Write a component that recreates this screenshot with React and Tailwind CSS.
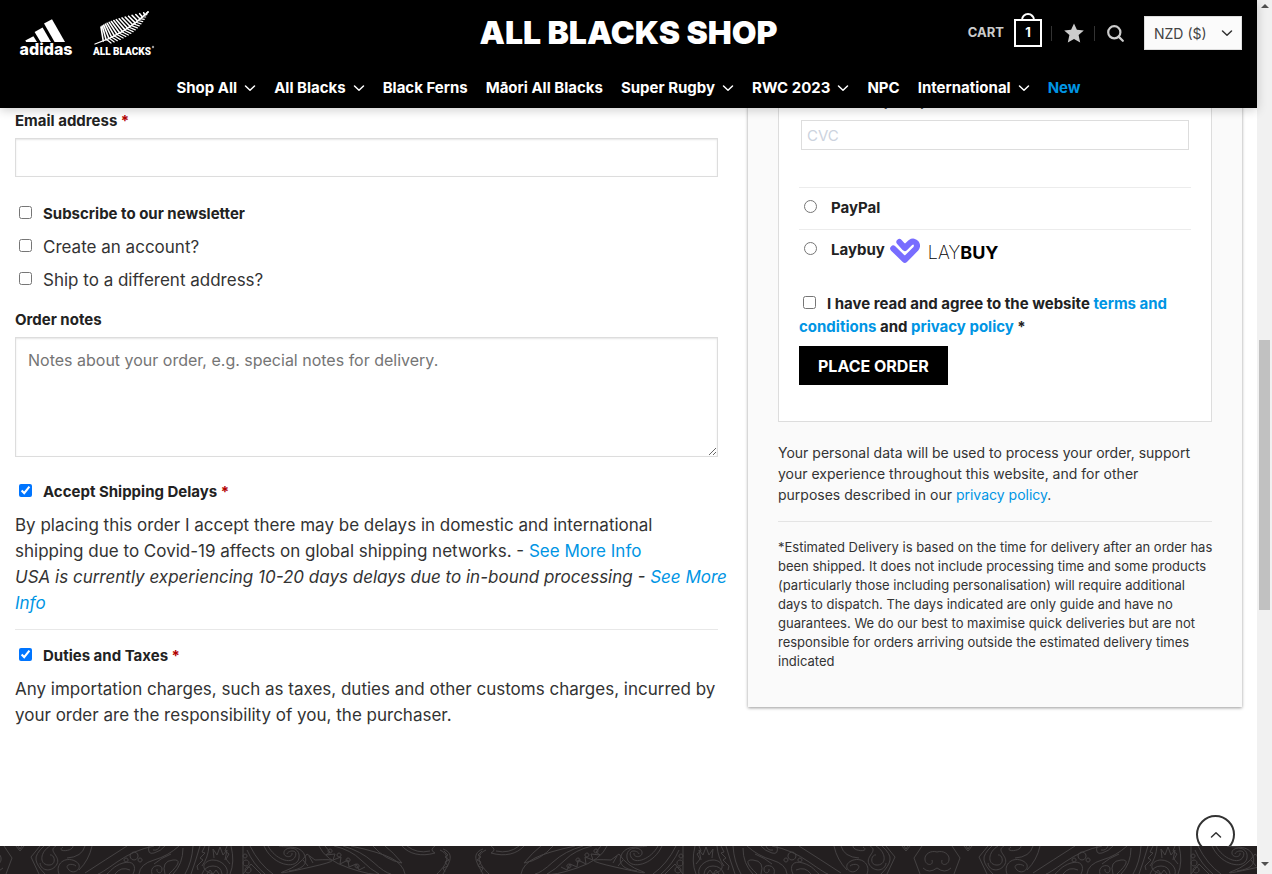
const NAV = [
  { label: "Shop All", menu: true },
  { label: "All Blacks", menu: true },
  { label: "Black Ferns" },
  { label: "Māori All Blacks" },
  { label: "Super Rugby", menu: true },
  { label: "RWC 2023", menu: true },
  { label: "NPC" },
  { label: "International", menu: true },
  { label: "New", accent: true },
];

function Chevron({ className }) {
  return (
    <svg viewBox="0 0 12 8" className={className} fill="none" stroke="currentColor" strokeWidth="1.5" strokeLinecap="round" strokeLinejoin="round" aria-hidden="true">
      <path d="M1.5 2 6 6.2 10.5 2" />
    </svg>
  );
}

function AdidasLogo() {
  return (
    <svg viewBox="0 0 54 40" className="h-10 w-[54px]" fill="#fff" role="img" aria-label="adidas">
      <path d="M25 5.6 33 1.2 46 24H35.6z" />
      <path d="M15.6 14 23.6 9.6 32 24H21.6z" />
      <path d="M6.3 22.6 14.4 18.2 18 24H7.2z" />
      <text x="27" y="36.5" textAnchor="middle" className="font-['Inter',sans-serif] text-[16px] font-extrabold">adidas</text>
    </svg>
  );
}

function quad(a, b, c, t) {
  const u = 1 - t;
  return [0, 1].map((i) => u * u * a[i] + 2 * u * t * b[i] + t * t * c[i]);
}

function AllBlacksLogo() {
  const stem = (t) => quad([4, 33], [34, 23], [57, 1], t);
  const upper = [];
  const lower = [];
  for (let i = 0; i <= 17; i += 1) {
    const k = i / 17;
    upper.push([stem(0.14 + 0.84 * k), quad([10, 16], [20, 8], [57, 1], k)]);
    lower.push([stem(0.2 + 0.78 * k), quad([20, 32], [48, 23], [57, 1], k)]);
  }
  const line = ([[x1, y1], [x2, y2]]) => `M${x1} ${y1}L${x2} ${y2}`;
  return (
    <svg viewBox="0 0 64 47" className="h-[47px] w-16" role="img" aria-label="All Blacks">
      <g fill="none" stroke="#fff" strokeLinecap="round">
        <path d="M4 33Q34 23 57 1" strokeWidth="1.3" />
        <path d={upper.map(line).join("")} strokeWidth="1.6" />
        <path d={lower.map(line).join("")} strokeWidth="1.2" />
      </g>
      <text x="31" y="43.5" textAnchor="middle" fill="#fff" className="font-['Roboto',sans-serif] text-[10px] font-black">ALL BLACKS</text>
      <circle cx="62" cy="36" r="1.2" fill="#999" />
    </svg>
  );
}

function LaybuyLogo() {
  return (
    <span className="flex items-center gap-2 text-black">
      <svg viewBox="0 0 30 26" className="h-[26px] w-[30px]" fill="none" stroke="#786dff" strokeWidth="6" strokeLinecap="round" strokeLinejoin="round" aria-hidden="true">
        <path d="M3.2 10.5 14.8 21.8 25.6 11C29 7 25 1.4 20.6 4.4L14.8 10 9.4 4" />
      </svg>
      <span className="pt-1 text-[18px] leading-5 font-extralight">LAY<b className="font-bold">BUY</b></span>
    </span>
  );
}

function Koru() {
  return (
    <g>
      <path d="M15 0 23 12 17 28M0 6C6 4 13 8 12 14S3 20 5 14M0 22Q8 28 14 22M27 0 31 5 35 0M29 0 31 3 33 0" />
      <path d="M51 0 42 11 50 28M55 0Q46 8 47 14T56 28M61 0C51 6 50 18 59 19S66 8 61 9M67 0C58 5 72 10 68 18S52 26 51 17M74 1C66 6 84 6 84 0M70 28C66 18 76 10 86 15S86 30 80 24 84 17 87 20M96 0Q93 11 78 12M103 0Q100 14 90 24" />
      <path d="M138 0Q116 14 96 27M165 0Q145 4 128 16T109 28M144 28C148 20 144 14 134 17S121 26 118 28M126 28Q132 20 141 24M145 6a4 4 0 1 0 .1 0M137 12a2 2 0 1 0 .1 0M151 12a2 2 0 1 0 .1 0M150 28Q151 18 165 14T190 0M163 28C160 19 173 17 173 23S167 27 168 23M176 28Q172 15 184 14T180 28M182 8Q172 12 165 18M160 0Q158 9 165 7T176 0M171 0Q169 5 164 4" />
      <path d="M194 2Q194 18 184 28M204 0Q203 16 196 28M211 0Q207 14 202 28M216 0 213 6 216 7 211 12 214 14 208 20 209 24M220 0Q219 12 213 20M224 28C209 24 215 14 224 14S240 22 238 28M213 28Q216 20 224 20T233 28M218 28 221 24 224 28 227 24 230 28M225 12 224 3 228 9 231 1 234 9 238 4 236 14M238 0 236 5 240 8 237 13 241 18M242 0Q246 16 241 28" />
      <path d="M254 0V28M258 4Q264 18 276 28M254 28 262 18 272 28M259 21a3 3 0 1 0 .1 0M256 8a2 2 0 1 0 .1 0M257 14a3 3 0 1 0 .1 0M261 0Q270 18 284 28" />
      <path d="M275 0C284 20 308 24 310 12S296 0 295 6 304 12 303 7M279 0C286 13 302 19 306 11S299 4 298 8M290 0C296 2 312-2 316 10S306 24 300 25M318 8Q310 20 296 25T322 21 326 14ZM320 10 324 17M314 14 319 20M330 0Q336 14 360 22T390 28M336 0 341 6 337 9 346 8 344 14 352 11 351 18 359 14 360 21 367 18 370 24 376 21M345 0Q362 4 372 14T390 28M354 0Q372 5 384 16T402 28M341 3a2 2 0 1 0 .1 0M350 7a2 2 0 1 0 .1 0M359 12a2 2 0 1 0 .1 0M368 18a2 2 0 1 0 .1 0" />
      <path d="M362 0Q390 6 402 12T416 28M384 0Q396 14 413 17 404 6 396 0M413 0C420 8 432 11 446 7Q440 4 446 0M418 0Q428 8 441 5M454 3C468 8 458 20 454 28M451 4C464 10 456 20 448 28M455 5 459 9 456 11 460 14 456 16 459 20 454 22 456 26" />
    </g>
  );
}

function FooterPattern() {
  return (
    <svg className="block h-7 w-full" aria-hidden="true">
      <defs>
        <pattern id="koru" x="-11" width="948" height="28" patternUnits="userSpaceOnUse">
          <g fill="none" stroke="#444142" strokeWidth="1">
            <Koru />
            <g transform="translate(948 0) scale(-1 1)">
              <Koru />
            </g>
          </g>
        </pattern>
      </defs>
      <rect width="100%" height="28" fill="url(#koru)" />
    </svg>
  );
}

function Check({ id, children, bold, required, ...rest }) {
  return (
    <div className="flex items-center leading-6">
      <input id={id} type="checkbox" className="mr-[11px] mb-[3px] ml-1 size-[13px]" {...rest} />
      <label htmlFor={id} className={bold ? "text-[15px] font-bold text-[#222]" : "text-[17px] text-[#333]"}>
        {children}
        {required && <span className="text-[#b20000]"> *</span>}
      </label>
    </div>
  );
}

function Link({ children }) {
  return <a href="#" className="text-[#0095e4]">{children}</a>;
}

function Header() {
  return (
    <header className="relative z-20 h-[108px] bg-black text-white shadow-[0_2px_10px_rgba(0,0,0,0.2)]">
      <div className="grid h-[66px] grid-cols-[1fr_auto_1fr] items-center px-[15px]">
        <div className="flex items-end gap-[18px] pt-[3px] pl-1">
          <AdidasLogo />
          <AllBlacksLogo />
        </div>
        <a href="#" className="text-[32px] leading-[66px] font-black">ALL BLACKS SHOP</a>
        <div className="flex items-center justify-end">
          <a href="#" className="flex items-center gap-[10px] text-[13px] font-bold text-[#ccc]">
            CART
            <span className="relative flex size-7 items-center justify-center border-2 border-white text-white">
              <span className="absolute -top-2 left-[5px] h-[7px] w-[14px] rounded-t-full border-2 border-b-0 border-white" />
              1
            </span>
          </a>
          <span className="mx-[9px] h-[15px] w-px bg-[#333]" />
          <a href="#" aria-label="Wishlist" className="px-[3px]">
            <svg viewBox="0 0 20 20" className="size-5" fill="#ccc"><path d="m10 .5 2.9 6.3 6.9.6-5.2 4.6 1.6 7.5-6.2-3.6-6.2 3.6 1.6-7.5L.2 7.4l6.900-.6z" /></svg>
          </a>
          <span className="mr-[12px] ml-[7px] h-[15px] w-px bg-[#333]" />
          <button type="button" aria-label="Search">
            <svg viewBox="0 0 17 17" className="size-[17px]" fill="none" stroke="#ccc" strokeWidth="2.2"><circle cx="7.3" cy="7.3" r="6.1" /><path d="m11.6 11.6 4.2 4.2" strokeLinecap="round" /></svg>
          </button>
          <div className="relative ml-5">
            <select aria-label="Currency" defaultValue="NZD" className="h-[34px] w-[98px] appearance-none border border-[#ddd] bg-[#fbfbfb] pl-[9px] text-[14px] text-[#444]">
              <option value="NZD">NZD ($)</option>
            </select>
            <Chevron className="pointer-events-none absolute top-[13px] right-[9px] h-[8px] w-3 text-[#333]" />
          </div>
        </div>
      </div>
      <nav className="flex h-[42px] items-center justify-center gap-[18px] pt-[2px] text-[15px] font-bold">
        {NAV.map((item) => (
          <a key={item.label} href="#" className={item.accent ? "text-[#0095e4]" : "flex items-center gap-[7px] whitespace-nowrap"}>
            {item.label}
            {item.menu && <Chevron className="h-[8px] w-3" />}
          </a>
        ))}
      </nav>
    </header>
  );
}

function Details() {
  return (
    <section className="pt-[31px]">
      <label htmlFor="email" className="block text-[15px] leading-6 font-bold text-[#222]">
        Email address <span className="text-[#b20000]">*</span>
      </label>
      <input id="email" type="email" className="mt-[5px] block h-[39px] w-full border border-[#ddd] bg-white px-3 shadow-[inset_0_1px_2px_rgba(0,0,0,0.1)]" />
      <div className="mt-[25px] flex flex-col gap-[9px]">
        <Check id="newsletter" bold>Subscribe to our newsletter</Check>
        <Check id="account">Create an account?</Check>
        <Check id="ship">Ship to a different address?</Check>
      </div>
      <label htmlFor="notes" className="mt-4 block text-[15px] leading-6 font-bold text-[#222]">Order notes</label>
      <textarea id="notes" placeholder="Notes about your order, e.g. special notes for delivery." className="mt-[5px] mb-[23px] block h-[120px] w-full border border-[#ddd] bg-white px-3 py-[10px] text-[16px] leading-6 shadow-[inset_0_1px_2px_rgba(0,0,0,0.1)] placeholder:text-[#757575]" />
      <Check id="delays" bold required defaultChecked>Accept Shipping Delays</Check>
      <p className="mt-2 border-b border-[#e8e8e8] pb-[13px] text-[17px] leading-[26px] whitespace-nowrap text-[#333]">
        By placing this order I accept there may be delays in domestic and international<br />
        shipping due to Covid-19 affects on global shipping networks. - <Link>See More Info</Link><br />
        <em>USA is currently experiencing 10-20 days delays due to in-bound processing - <Link>See More<br />Info</Link></em>
      </p>
      <div className="mt-[14px]">
        <Check id="duties" bold required defaultChecked>Duties and Taxes</Check>
      </div>
      <p className="mt-2 text-[17px] leading-[26px] text-[#333]">
        Any importation charges, such as taxes, duties and other customs charges, incurred by<br />
        your order are the responsibility of you, the purchaser.
      </p>
    </section>
  );
}

function Payment() {
  return (
    <aside className="self-start bg-[#fafafa] px-[30px] pb-9 shadow-[0_1px_3px_rgba(0,0,0,0.4)]">
      <div className="border border-t-0 border-[#ddd] bg-white px-5 pt-[12px] pb-9 text-[15px] font-bold text-[#222]">
        <div className="px-[2px] pb-[37px]">
          <label htmlFor="cvc" className="block leading-6">Card Code (CVC) *</label>
          <input id="cvc" placeholder="CVC" className="mt-[6px] block h-[30px] w-full border border-[#ddd] px-[5px] text-[15px] font-normal placeholder:text-[#ccd3de]" />
        </div>
        <div className="flex h-[42px] items-center border-t border-[#ececec]">
          <input id="paypal" type="radio" name="method" className="mr-[14px] mb-1 ml-[5px] size-[13px]" />
          <label htmlFor="paypal">PayPal</label>
        </div>
        <div className="flex h-[42px] items-center border-t border-[#ececec]">
          <input id="laybuy" type="radio" name="method" className="mr-[14px] mb-1 ml-[5px] size-[13px]" />
          <label htmlFor="laybuy" className="flex items-center gap-[5px]">Laybuy <LaybuyLogo /></label>
        </div>
        <div className="mt-[21px] leading-[23px]">
          <input id="terms" type="checkbox" className="mr-[11px] ml-1 size-[13px]" />
          <label htmlFor="terms">I have read and agree to the website <Link>terms and<br />conditions</Link> and <Link>privacy policy</Link> *</label>
        </div>
        <button type="button" className="mt-2 block h-[39px] bg-black px-[19px] text-[16px] text-white">PLACE ORDER</button>
      </div>
      <p className="mt-5 border-b border-[#e4e4e4] pb-4 text-[14px] leading-[21px] text-[#333]">
        Your personal data will be used to process your order, support<br />
        your experience throughout this website, and for other<br />
        purposes described in our <Link>privacy policy</Link>.
      </p>
      <p className="mt-4 text-[13px] leading-[19px] whitespace-nowrap text-[#333]">
        *Estimated Delivery is based on the time for delivery after an order has<br />
        been shipped. It does not include processing time and some products<br />
        (particularly those including personalisation) will require additional<br />
        days to dispatch. The days indicated are only guide and have no<br />
        guarantees. We do our best to maximise quick deliveries but are not<br />
        responsible for orders arriving outside the estimated delivery times<br />
        indicated
      </p>
    </aside>
  );
}

function Scrollbar() {
  return (
    <div className="flex w-[15px] shrink-0 flex-col items-center justify-between bg-[#f1f1f1] py-1" aria-hidden="true">
      <svg viewBox="0 0 8 4" className="h-1 w-2" fill="#505050"><path d="M0 4 4 0l4 4z" /></svg>
      <div className="mt-20 h-[270px] w-[11px] bg-[#c1c1c1]" />
      <svg viewBox="0 0 8 4" className="mb-1 h-1 w-2" fill="#505050"><path d="m0 0 4 4 4-4z" /></svg>
    </div>
  );
}

export default function App() {
  return (
    <div className="flex h-screen overflow-hidden bg-white font-['Inter',sans-serif]">
      <div className="flex min-w-0 flex-1 flex-col">
        <Header />
        <main className="-mt-[30px] grid flex-1 grid-cols-[minmax(0,703fr)_minmax(0,494fr)] gap-[30px] px-[15px]">
          <Details />
          <Payment />
        </main>
        <footer className="relative bg-[#231f20]">
          <button type="button" aria-label="Back to top" className="absolute -top-[31px] right-[22px] flex size-[39px] items-center justify-center rounded-full border-2 border-[#333] text-[#333]">
            <Chevron className="h-[8px] w-3 rotate-180" />
          </button>
          <div className="relative bg-[#231f20]"><FooterPattern /></div>
        </footer>
      </div>
      <Scrollbar />
    </div>
  );
}
